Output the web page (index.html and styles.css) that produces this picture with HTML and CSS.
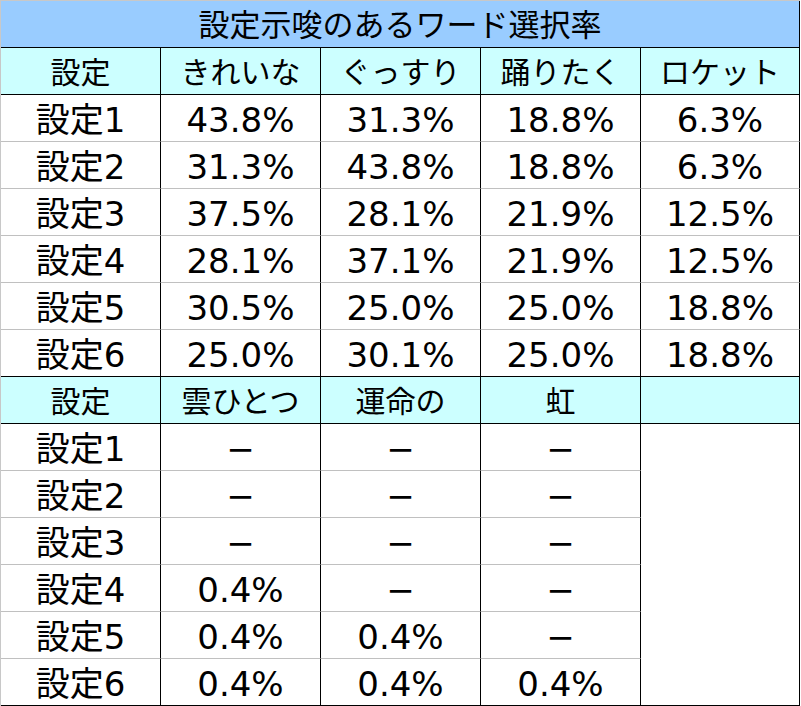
FILE: index.html
```html
<!DOCTYPE html>
<html lang="ja">
<head>
<meta charset="utf-8">
<link rel="stylesheet" href="styles.css">
</head>
<body>
<div class="sheet">
  <div class="cell title">設定示唆のあるワード選択率</div>

  <div class="cell head">設定</div>
  <div class="cell head">きれいな</div>
  <div class="cell head">ぐっすり</div>
  <div class="cell head">踊りたく</div>
  <div class="cell head">ロケット</div>

  <div class="cell">設定1</div><div class="cell">43.8%</div><div class="cell">31.3%</div><div class="cell">18.8%</div><div class="cell">6.3%</div>
  <div class="cell">設定2</div><div class="cell">31.3%</div><div class="cell">43.8%</div><div class="cell">18.8%</div><div class="cell">6.3%</div>
  <div class="cell">設定3</div><div class="cell">37.5%</div><div class="cell">28.1%</div><div class="cell">21.9%</div><div class="cell">12.5%</div>
  <div class="cell">設定4</div><div class="cell">28.1%</div><div class="cell">37.1%</div><div class="cell">21.9%</div><div class="cell">12.5%</div>
  <div class="cell">設定5</div><div class="cell">30.5%</div><div class="cell">25.0%</div><div class="cell">25.0%</div><div class="cell">18.8%</div>
  <div class="cell last">設定6</div><div class="cell last">25.0%</div><div class="cell last">30.1%</div><div class="cell last">25.0%</div><div class="cell last">18.8%</div>

  <div class="cell head">設定</div>
  <div class="cell head">雲ひとつ</div>
  <div class="cell head">運命の</div>
  <div class="cell head">虹</div>
  <div class="cell head"></div>

  <div class="cell">設定1</div><div class="cell">−</div><div class="cell">−</div><div class="cell">−</div>
  <div class="cell blank"></div>
  <div class="cell">設定2</div><div class="cell">−</div><div class="cell">−</div><div class="cell">−</div>
  <div class="cell">設定3</div><div class="cell">−</div><div class="cell">−</div><div class="cell">−</div>
  <div class="cell">設定4</div><div class="cell">0.4%</div><div class="cell">−</div><div class="cell">−</div>
  <div class="cell">設定5</div><div class="cell">0.4%</div><div class="cell">0.4%</div><div class="cell">−</div>
  <div class="cell last">設定6</div><div class="cell last">0.4%</div><div class="cell last">0.4%</div><div class="cell last">0.4%</div>
</div>
</body>
</html>
```

FILE: styles.css
```css
html, body {
  margin: 0;
  padding: 0;
  background: #ffffff;
}

.sheet {
  display: grid;
  grid-template-columns: 160px 160px 160px 160px 159px;
  grid-auto-rows: 47px;
  width: 799px;
  border-top: 1px solid #c8c8c8;
  border-left: 1px solid #c8c8c8;
  font-family: "DejaVu Sans", "Noto Sans CJK JP", sans-serif;
  font-size: 34px;
  color: #000000;
}

.cell {
  display: flex;
  align-items: center;
  justify-content: center;
  border-right: 1px solid #000000;
  border-bottom: 1px solid #c0c0c0;
  background: #ffffff;
  white-space: nowrap;
  line-height: 1;
  padding-top: 3px;
  box-sizing: border-box;
}

.title {
  grid-column: 1 / 6;
  background: #99ccff;
  border-bottom-color: #000000;
  font-size: 31px;
  padding-top: 2px;
}

.head {
  background: #ccffff;
  border-bottom-color: #000000;
  font-size: 30px;
}

.last {
  border-bottom-color: #000000;
}

.blank {
  grid-column: 5;
  grid-row: span 6;
  border-bottom-color: #000000;
}
```
